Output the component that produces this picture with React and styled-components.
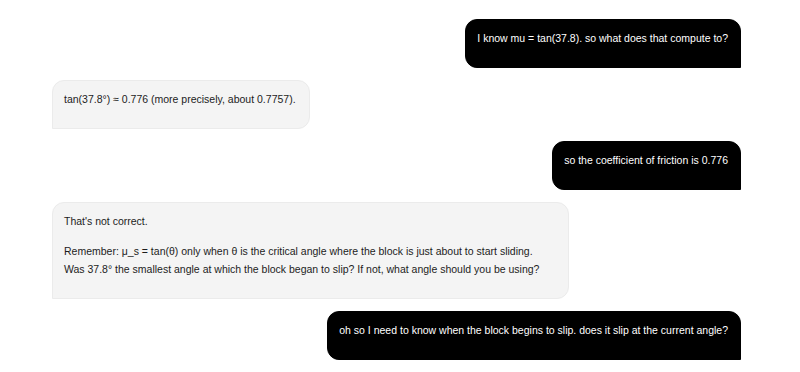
import React from 'react';
import styled, { createGlobalStyle } from 'styled-components';

const GlobalStyle = createGlobalStyle`
  html, body {
    margin: 0;
    padding: 0;
    background-color: #ffffff;
  }
  body {
    font-family: "Liberation Sans", Arial, sans-serif;
  }
`;

const ChatLayout = styled.div`
  display: flex;
  flex-direction: column;
  gap: 12px;
  padding: 19px 59px 12px 52px;
`;

const Row = styled.div`
  display: flex;
  justify-content: ${({ $user }) => ($user ? 'flex-end' : 'flex-start')};
`;

const Bubble = styled.div`
  box-sizing: border-box;
  max-width: 75%;
  width: ${({ $wide }) => ($wide ? '75%' : 'auto')};
  padding: ${({ $user }) => ($user ? '9px 12px 8px 11px' : '9px 13px 8px 11px')};
  font-size: 10.5px;
  line-height: 18px;
  border-radius: ${({ $user }) => ($user ? '12px 12px 0 12px' : '12px 12px 12px 0')};
  background-color: ${({ $user }) => ($user ? '#000000' : '#f4f4f4')};
  color: ${({ $user }) => ($user ? '#ffffff' : '#1c1c1c')};
  border: 1px solid ${({ $user }) => ($user ? '#000000' : '#ebebeb')};
`;

const Paragraph = styled.p`
  margin: 0 0 12px 0;
  white-space: nowrap;
`;

const messages = [
  { user: true, lines: [['I know mu = tan(37.8). so what does that compute to?']] },
  { user: false, lines: [['tan(37.8°) ≈ 0.776 (more precisely, about 0.7757).']] },
  { user: true, lines: [['so the coefficient of friction is 0.776']] },
  {
    user: false,
    wide: true,
    lines: [
      ["That's not correct."],
      [
        'Remember: μ_s = tan(θ) only when θ is the critical angle where the block is just about to start sliding.',
        'Was 37.8° the smallest angle at which the block began to slip? If not, what angle should you be using?',
      ],
    ],
  },
  {
    user: true,
    lines: [['oh so I need to know when the block begins to slip. does it slip at the current angle?']],
  },
];

const App = () => {
  return (
    <>
      <GlobalStyle />
      <ChatLayout>
        {messages.map((msg, i) => (
          <Row key={i} $user={msg.user}>
            <Bubble $user={msg.user} $wide={msg.wide}>
              {msg.lines.map((para, j) => (
                <Paragraph key={j}>
                  {para.map((line, k) => (
                    <React.Fragment key={k}>
                      {k > 0 && <br />}
                      {line}
                    </React.Fragment>
                  ))}
                </Paragraph>
              ))}
            </Bubble>
          </Row>
        ))}
      </ChatLayout>
    </>
  );
};

export default App;
